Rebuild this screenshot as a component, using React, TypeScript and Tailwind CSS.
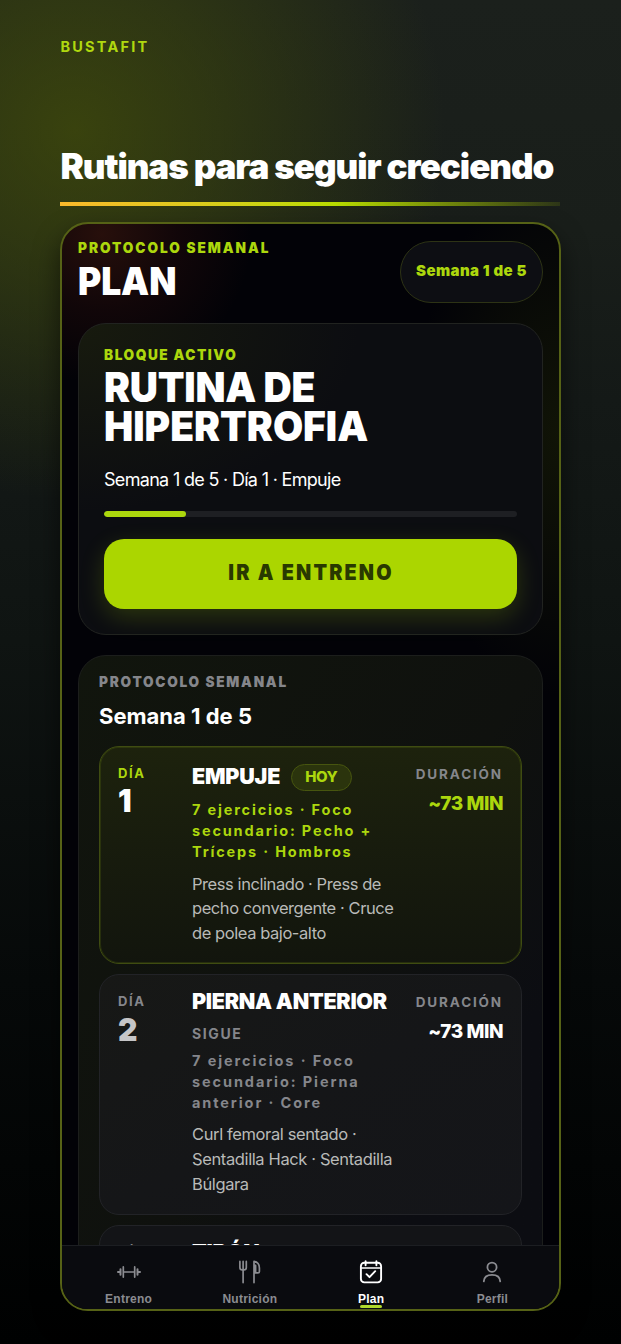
import React from "react";

type Day = {
  day: string;
  name: React.ReactNode;
  note?: string;
  meta: string[];
  detail: string[];
  duration: string;
  active?: boolean;
};

const days: Day[] = [
  {
    day: "1",
    name: "EMPUJE",
    meta: ["7 ejercicios · Foco", "secundario: Pecho +", "Tríceps · Hombros"],
    detail: ["Press inclinado · Press de", "pecho convergente · Cruce", "de polea bajo-alto"],
    duration: "~73 MIN",
    active: true,
  },
  {
    day: "2",
    name: "PIERNA ANTERIOR",
    note: "SIGUE",
    meta: ["7 ejercicios · Foco", "secundario: Pierna", "anterior · Core"],
    detail: ["Curl femoral sentado ·", "Sentadilla Hack · Sentadilla", "Búlgara"],
    duration: "~73 MIN",
  },
];

function Lines({ items }: { items: string[] }) {
  return (
    <>
      {items.map((line) => (
        <span key={line} className="block whitespace-nowrap">
          {line}
        </span>
      ))}
    </>
  );
}

function DayCard({ d }: { d: Day }) {
  const on = d.active;
  return (
    <article
      className={
        on
          ? "grid h-[218.5px] shrink-0 grid-cols-[74px_213px_98px] rounded-[20px] border border-[#3f4c11] bg-linear-to-b from-[#1d220d] to-[#12150d] px-[18px] pt-[17px] shadow-[inset_0_0_0_1px_rgba(90,110,15,0.28)]"
          : "grid h-[241px] shrink-0 grid-cols-[74px_213px_98px] rounded-[20px] border border-[#222327] bg-linear-to-br from-[#171816] via-[#151618] to-[#141519] px-[18px] pt-[17px]"
      }
    >
      <div>
        <p className={on ? "text-[13px] font-bold leading-[18px] tracking-[1.6px] text-[#acd70d]" : "text-[13px] font-bold leading-[18px] tracking-[1.6px] text-[#85868b]"}>DÍA</p>
        <p className={on ? "mt-[3px] origin-left scale-x-[0.94] text-[32px] font-black leading-[32px] text-white" : "mt-[4px] origin-left scale-x-[0.94] text-[32px] font-black leading-[32px] text-[#c5c5c7]"}>{d.day}</p>
      </div>
      <div>
        <div className={on ? "flex h-[27px] items-start" : "flex h-[22px] items-start"}>
          <h3 className={on ? "w-[99px] whitespace-nowrap text-[21.5px] font-black leading-6 tracking-[-0.2px] text-white" : "-mt-[3px] whitespace-nowrap text-[21.5px] font-black leading-[24px] tracking-[-0.28px] text-white"}>{d.name}</h3>
          {on && (
            <span className="flex h-[27px] w-[60.5px] justify-center rounded-full border border-[#47550f] bg-[#2b340d] text-[15px] font-extrabold leading-[23px] tracking-[-0.4px] text-[#acd70d]">HOY</span>
          )}
        </div>
        {d.note && <p className="mt-[6px] h-[30px] text-[14px] font-bold leading-[27px] tracking-[1.6px] text-[#85868b]">{d.note}</p>}
        <p className={on ? "mt-2 text-[14.5px] font-bold leading-[21.2px] tracking-[1.82px] text-[#acd70d]" : "text-[14.5px] font-bold leading-[21.2px] tracking-[1.9px] text-[#85868b]"}>
          <Lines items={d.meta} />
        </p>
        <p className={on ? "mt-[9.5px] text-[16.5px] leading-[24.8px] tracking-[-0.43px] text-[#b9bab8]" : "mt-[8.5px] text-[16.5px] leading-[24.8px] tracking-[-0.38px] text-[#b9bab8]"}>
          <Lines items={d.detail} />
        </p>
      </div>
      <div className="flex flex-col items-end">
        <p className="mt-px whitespace-nowrap text-[13.5px] font-bold leading-[18px] tracking-[1.85px] text-[#85868b]">DURACIÓN</p>
        <p className={on ? "mt-[9px] whitespace-nowrap text-[19px] font-extrabold leading-6 tracking-[-0.45px] text-[#acd70d]" : "mt-[9px] whitespace-nowrap text-[19px] font-extrabold leading-6 tracking-[-0.45px] text-white"}>{d.duration}</p>
      </div>
    </article>
  );
}

function DumbbellIcon() {
  return (
    <svg width="24" height="24" viewBox="0 0 24 24" fill="none" stroke="currentColor" strokeWidth="1.7" strokeLinecap="round">
      <path d="M6.3 12h11.4M6.3 6.9v10.2M17.7 6.9v10.2" />
      <path d="M3.5 9.2v5.6M20.5 9.2v5.6" strokeWidth="2" />
      <path d="M1 12h2M21 12h2" strokeWidth="2" />
    </svg>
  );
}

function CutleryIcon() {
  return (
    <svg width="24" height="24" viewBox="0 0 24 24" fill="none" stroke="currentColor" strokeWidth="1.7" strokeLinecap="round" strokeLinejoin="round">
      <path d="M1.9 1.4v6c0 1.5 1 2.4 2.5 2.4h1.4c1.5 0 2.5-.9 2.5-2.4v-6M5.1 1.4v21.2" />
      <path d="M16 22.6V1.4c3.5.6 5.4 3.2 5.4 6.6v3.4c0 .9-.6 1.5-1.5 1.5H16M16 5.4h1.6v7.3" />
    </svg>
  );
}

function CalendarIcon() {
  return (
    <svg width="24" height="24" viewBox="0 0 24 24" fill="none" stroke="currentColor" strokeWidth="1.9" strokeLinecap="round" strokeLinejoin="round">
      <rect x="1.9" y="2.8" width="20.2" height="19.6" rx="3.4" />
      <path d="M2 8h20" strokeWidth="1.6" />
      <path d="M6.6 1.2v4M17.4 1.2v4M7.5 14.2l3 3 5.7-6" />
    </svg>
  );
}

function PersonIcon() {
  return (
    <svg width="24" height="24" viewBox="0 0 24 24" fill="none" stroke="currentColor" strokeWidth="1.8" strokeLinecap="round">
      <circle cx="12" cy="7.2" r="4.6" />
      <path d="M3.8 21.4c.2-4.4 3.4-6.6 8.2-6.6s8 2.2 8.2 6.6" />
    </svg>
  );
}

const tabs = [
  { label: "Entreno", icon: <DumbbellIcon /> },
  { label: "Nutrición", icon: <CutleryIcon /> },
  { label: "Plan", icon: <CalendarIcon />, active: true },
  { label: "Perfil", icon: <PersonIcon /> },
];

export default function App() {
  return (
    <main className="h-[1344px] w-[621px] overflow-hidden bg-[radial-gradient(circle_at_75px_130px,rgba(76,88,6,0.62)_0px,rgba(72,84,8,0.42)_150px,rgba(60,70,10,0)_370px),linear-gradient(180deg,#1b201c_0px,#191e1a_230px,#141917_400px,#0f1412_640px,#060909_980px,#000101_1344px)] px-[60px] pt-[37px] font-['Inter',sans-serif]">
      <p className="ml-[0.5px] text-[14.5px] font-bold leading-5 tracking-[2.2px] text-[#b0d80f]">BUSTAFIT</p>
      <h1 className="mt-[87px] ml-[0.5px] whitespace-nowrap text-[35px] font-black leading-[44px] tracking-[-1.06px] text-white">Rutinas para seguir creciendo</h1>
      <div className="mt-[14px] h-1 w-[500px] bg-linear-to-r from-[#fab92b] via-[#b8dc00] via-55% to-[#b8dc00]/12" />

      <section className="mt-4 flex h-[1089px] w-[501px] flex-col overflow-hidden rounded-[28px] border-2 border-[#566216] bg-[radial-gradient(circle_at_40px_10px,rgba(150,55,25,0.25)_0px,rgba(120,35,20,0.13)_75px,rgba(80,20,20,0)_150px),radial-gradient(ellipse_at_500px_210px,rgba(70,85,5,0.22)_0px,rgba(70,85,5,0)_150px)] bg-[#020207] shadow-[0_12px_26px_rgba(0,0,0,0.55)]">
        <div className="flex min-h-0 flex-1 flex-col overflow-hidden px-4 pt-[14px]">
          <header className="flex h-[85px] shrink-0 items-start justify-between">
            <div>
              <p className="origin-left scale-x-[0.94] whitespace-nowrap text-[14.5px] font-black leading-5 tracking-[2.07px] text-[#acd70d]">PROTOCOLO SEMANAL</p>
              <h2 className="mt-[2px] origin-left scale-x-[0.92] text-[38.5px] font-black leading-[43px] tracking-[-0.1px] text-white">PLAN</h2>
            </div>
            <div className="mt-[3px] flex h-[62px] w-[143px] shrink-0 justify-center rounded-full border border-[#2d3315] bg-[#0d0e13] text-[15px] font-black leading-[57px] tracking-[0.42px] text-[#acd70d]">Semana 1 de 5</div>
          </header>

          <section className="flex h-[311.5px] shrink-0 flex-col rounded-[28px] border border-[#212320] bg-[radial-gradient(ellipse_at_0px_0px,rgba(45,52,8,0.34)_0px,rgba(45,52,8,0)_280px)] bg-[#0c0d11] px-[25px] pt-[21px]">
            <p className="origin-left scale-x-[0.94] whitespace-nowrap text-[14.5px] font-black leading-5 tracking-[1.65px] text-[#acd70d]">BLOQUE ACTIVO</p>
            <h2 className="mt-[3px] origin-left scale-x-[0.94] whitespace-nowrap text-[41.5px] font-black leading-[38.5px] text-white">
              <span className="block tracking-[-0.25px]">RUTINA DE</span>
              <span className="block tracking-[-0.02px]">HIPERTROFIA</span>
            </h2>
            <p className="mt-[21px] text-[18px] leading-7 tracking-[-0.69px] text-white">Semana 1 de 5 · Día 1 · Empuje</p>
            <div className="mt-[17px] h-[6px] shrink-0 overflow-hidden rounded-full bg-[#1e1f23]">
              <div className="h-full w-[82px] rounded-full bg-[#acd70d]" />
            </div>
            <button className="mt-[22px] h-[69.5px] shrink-0 rounded-[20px] bg-[#abd600] text-[21.5px] font-black text-[#293900] shadow-[0_8px_24px_rgba(171,214,0,0.2)]">
              <span className="mb-[3px] ml-px block scale-x-[0.92] leading-[63px] tracking-[2.37px]">IR A ENTRENO</span>
            </button>
          </section>

          <section className="mt-[20.5px] flex h-[700px] shrink-0 flex-col rounded-t-[28px] border border-[#1c1e1c] bg-linear-to-br from-[#11150d] via-[#0f110e] to-[#0c0d12] to-75% px-5 pt-4">
            <p className="origin-left scale-x-[0.94] whitespace-nowrap text-[14.5px] font-black leading-5 tracking-[1.85px] text-[#85868b]">PROTOCOLO SEMANAL</p>
            <h3 className="mt-[10px] text-[22px] font-bold leading-7 text-white">Semana 1 de 5</h3>
            <div className="mt-[15.5px] flex flex-col gap-[10px]">
              {days.map((d) => (
                <DayCard key={d.day} d={d} />
              ))}
              <article className="grid h-[220px] grid-cols-[74px_213px_98px] rounded-[20px] border border-[#222327] bg-[#131417] px-[18px] pt-[17px]">
                <p className="text-[13px] font-bold leading-[18px] tracking-[1.6px] text-[#85868b]">DÍA</p>
                <h3 className="-mt-[3px] text-[21.5px] font-black leading-[24px] tracking-[-0.2px] text-white">TIRÓN</h3>
              </article>
            </div>
          </section>
        </div>

        <nav className="grid h-[64px] shrink-0 grid-cols-4 border-t border-[#1c1e22] bg-[#0a0b0f] px-[6px] font-['Liberation_Sans',sans-serif] text-[12px] font-bold">
          {tabs.map((t) => (
            <div key={t.label} className={t.active ? "flex flex-col items-center pt-[14px] text-white" : "flex flex-col items-center pt-[14px] text-[#8b8c91]"}>
              {t.icon}
              <span className="mt-[6.5px] leading-4 tracking-[0.24px]">{t.label}</span>
              {t.active && <span className="-mt-[1.5px] h-[2.5px] w-[22px] shrink-0 rounded-full bg-[#b0d82c]" />}
            </div>
          ))}
        </nav>
      </section>
    </main>
  );
}
